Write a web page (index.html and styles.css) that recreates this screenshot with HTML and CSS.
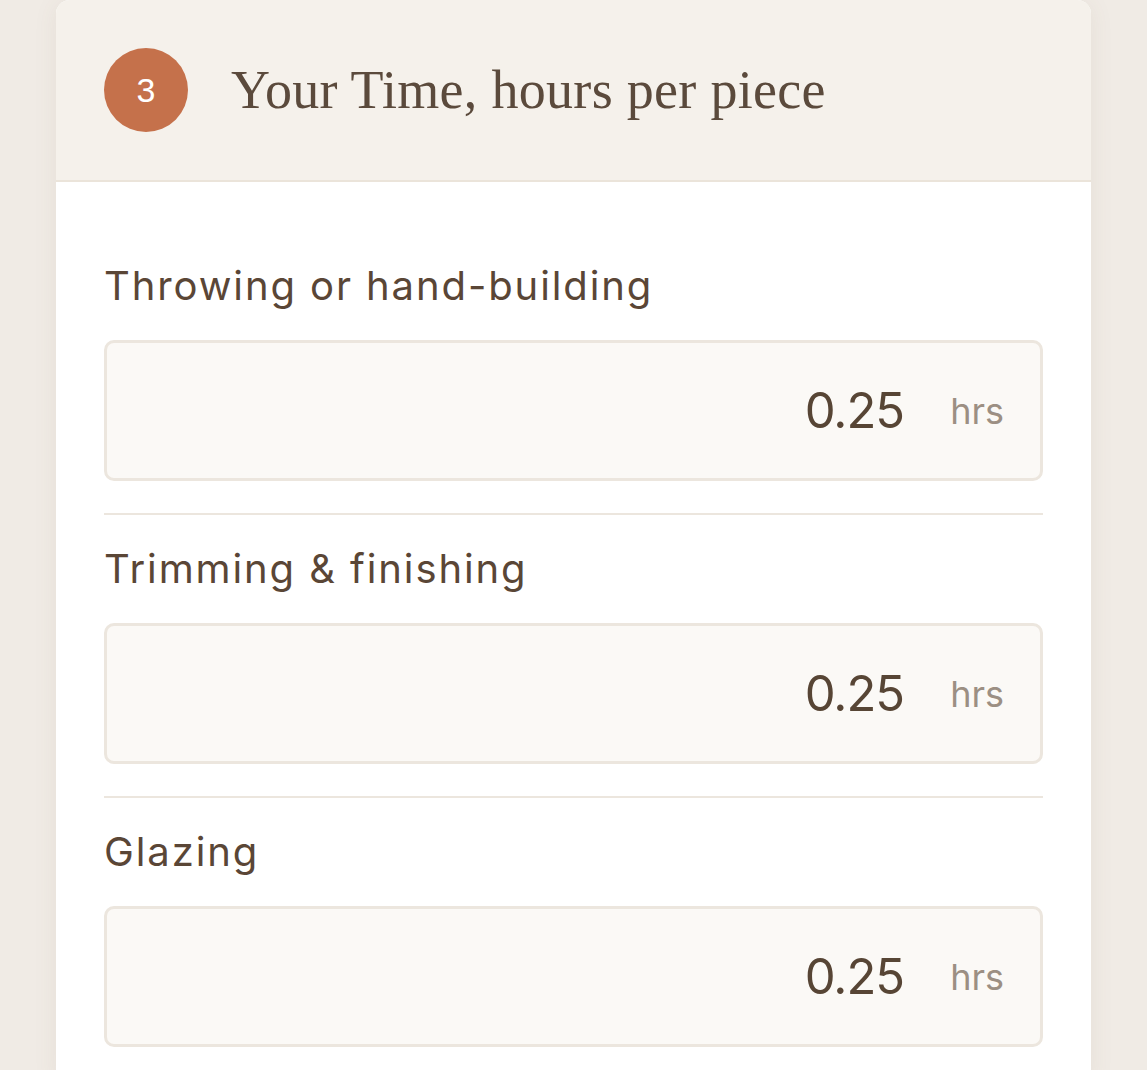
FILE: index.html
```html
<!DOCTYPE html>
<html lang="en">
<head>
  <meta charset="UTF-8">
  <title>Your Time</title>
  <link rel="stylesheet" href="styles.css">
</head>
<body>

  <div class="card">
    <div class="card-header">
      <span class="step">3</span>
      <h2>Your Time, hours per piece</h2>
    </div>

    <div class="card-body">
      <div class="field">
        <label for="throwing">Throwing or hand-building</label>
        <div class="input-box">
          <input type="text" id="throwing" value="0.25" />
          <span class="unit">hrs</span>
        </div>
      </div>

      <div class="field">
        <label for="trimming">Trimming &amp; finishing</label>
        <div class="input-box">
          <input type="text" id="trimming" value="0.25" />
          <span class="unit">hrs</span>
        </div>
      </div>

      <div class="field">
        <label for="glazing">Glazing</label>
        <div class="input-box">
          <input type="text" id="glazing" value="0.25" />
          <span class="unit">hrs</span>
        </div>
      </div>
    </div>
  </div>

</body>
</html>
```

FILE: styles.css
```css
body {
  margin: 0;
  background: #f0ebe5;
  font-family: Inter, 'Open Sans', sans-serif;
  color: #5a4636;
  overflow: hidden;
}

.card {
  width: 1035px;
  margin: 0 auto;
  background: white;
  border-radius: 14px 14px 0 0;
  box-shadow: 0 2px 24px rgba(120, 90, 60, 0.08);
  overflow: hidden;
}

.card-header {
  display: flex;
  align-items: center;
  gap: 43px;
  height: 180px;
  padding: 0 48px;
  background: #f5f1eb;
  border-bottom: 2px solid #ebe4da;
}

.step {
  width: 84px;
  height: 84px;
  border-radius: 50%;
  background: #c5714b;
  color: white;
  font-family: 'Liberation Sans', Arial, sans-serif;
  font-size: 34px;
  display: flex;
  align-items: center;
  justify-content: center;
  flex-shrink: 0;
}

.card-header h2 {
  margin: 0;
  font-family: 'Liberation Serif', 'Times New Roman', serif;
  font-weight: normal;
  font-size: 54px;
  color: #5b4a3c;
  letter-spacing: 0.3px;
}

.card-body {
  padding: 50px 48px 0;
}

.field {
  padding: 28px 0 32px;
  border-bottom: 2px solid #ece6de;
}

.field label {
  display: block;
  font-size: 40px;
  line-height: 52px;
  letter-spacing: 1.9px;
  margin-bottom: 28px;
}

.input-box {
  display: flex;
  align-items: center;
  height: 135px;
  background: #fbf9f6;
  border: 3px solid #ece6de;
  border-radius: 10px;
  padding: 0 36px 0 24px;
}

.input-box input {
  flex: 1;
  min-width: 0;
  border: none;
  background: transparent;
  outline: none;
  text-align: right;
  font-family: Inter, 'Open Sans', sans-serif;
  font-size: 49px;
  letter-spacing: -1px;
  color: #574535;
  padding: 0;
}

.unit {
  margin-left: 46px;
  font-size: 36px;
  color: #9c8f83;
}
```
